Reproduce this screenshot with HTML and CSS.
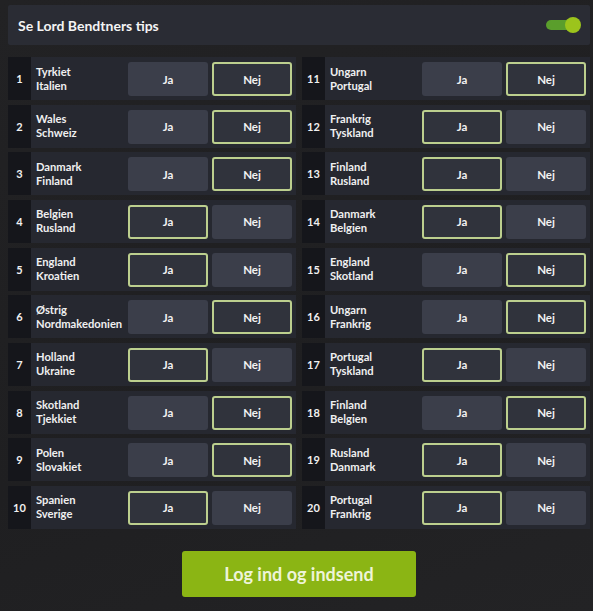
FILE: index.html
```html
<!DOCTYPE html>
<html lang="da">
<head>
<meta charset="utf-8">
<title>Se Lord Bendtners tips</title>
<link rel="stylesheet" href="styles.css">
</head>
<body>
<div class="page">
  <div class="header">
    <span class="title">Se Lord Bendtners tips</span>
    <span class="toggle"><span class="knob"></span></span>
  </div>
  <div class="grid">
    <div class="col">
      <div class="row"><div class="num">1</div><div class="teams">Tyrkiet<br>Italien</div><div class="btn">Ja</div><div class="btn sel">Nej</div></div>
      <div class="row"><div class="num">2</div><div class="teams">Wales<br>Schweiz</div><div class="btn">Ja</div><div class="btn sel">Nej</div></div>
      <div class="row"><div class="num">3</div><div class="teams">Danmark<br>Finland</div><div class="btn">Ja</div><div class="btn sel">Nej</div></div>
      <div class="row"><div class="num">4</div><div class="teams">Belgien<br>Rusland</div><div class="btn sel">Ja</div><div class="btn">Nej</div></div>
      <div class="row"><div class="num">5</div><div class="teams">England<br>Kroatien</div><div class="btn sel">Ja</div><div class="btn">Nej</div></div>
      <div class="row"><div class="num">6</div><div class="teams">Østrig<br>Nordmakedonien</div><div class="btn">Ja</div><div class="btn sel">Nej</div></div>
      <div class="row"><div class="num">7</div><div class="teams">Holland<br>Ukraine</div><div class="btn sel">Ja</div><div class="btn">Nej</div></div>
      <div class="row"><div class="num">8</div><div class="teams">Skotland<br>Tjekkiet</div><div class="btn">Ja</div><div class="btn sel">Nej</div></div>
      <div class="row"><div class="num">9</div><div class="teams">Polen<br>Slovakiet</div><div class="btn">Ja</div><div class="btn sel">Nej</div></div>
      <div class="row"><div class="num">10</div><div class="teams">Spanien<br>Sverige</div><div class="btn sel">Ja</div><div class="btn">Nej</div></div>
    </div>
    <div class="col">
      <div class="row"><div class="num">11</div><div class="teams">Ungarn<br>Portugal</div><div class="btn">Ja</div><div class="btn sel">Nej</div></div>
      <div class="row"><div class="num">12</div><div class="teams">Frankrig<br>Tyskland</div><div class="btn sel">Ja</div><div class="btn">Nej</div></div>
      <div class="row"><div class="num">13</div><div class="teams">Finland<br>Rusland</div><div class="btn sel">Ja</div><div class="btn">Nej</div></div>
      <div class="row"><div class="num">14</div><div class="teams">Danmark<br>Belgien</div><div class="btn sel">Ja</div><div class="btn">Nej</div></div>
      <div class="row"><div class="num">15</div><div class="teams">England<br>Skotland</div><div class="btn">Ja</div><div class="btn sel">Nej</div></div>
      <div class="row"><div class="num">16</div><div class="teams">Ungarn<br>Frankrig</div><div class="btn">Ja</div><div class="btn sel">Nej</div></div>
      <div class="row"><div class="num">17</div><div class="teams">Portugal<br>Tyskland</div><div class="btn sel">Ja</div><div class="btn">Nej</div></div>
      <div class="row"><div class="num">18</div><div class="teams">Finland<br>Belgien</div><div class="btn">Ja</div><div class="btn sel">Nej</div></div>
      <div class="row"><div class="num">19</div><div class="teams">Rusland<br>Danmark</div><div class="btn sel">Ja</div><div class="btn">Nej</div></div>
      <div class="row"><div class="num">20</div><div class="teams">Portugal<br>Frankrig</div><div class="btn sel">Ja</div><div class="btn">Nej</div></div>
    </div>
  </div>
  <div class="footer">
    <div class="submit">Log ind og indsend</div>
  </div>
</div>
</body>
</html>
```

FILE: styles.css
```css
html, body {
  margin: 0;
  padding: 0;
}
body {
  background: linear-gradient(160deg, #222224 0%, #1f1f21 60%, #232325 100%);
  font-family: Lato, "Open Sans", "Liberation Sans", sans-serif;
  color: #f2f2f2;
  width: 593px;
  height: 611px;
  overflow: hidden;
}
.page {
  padding: 5px 3px 0 8px;
}
.header {
  height: 40px;
  background: #2a2c34;
  border-radius: 2px;
  display: flex;
  align-items: center;
  justify-content: space-between;
  padding: 0 10px 0 10px;
  box-sizing: border-box;
}
.title {
  font-size: 14px;
  font-weight: 700;
  color: #f4f4f4;
}
.toggle {
  position: relative;
  width: 28px;
  height: 10px;
  border-radius: 5px;
  background: #5a9e2c;
  margin-right: 6px;
}
.knob {
  position: absolute;
  right: -7px;
  top: -3px;
  width: 16px;
  height: 16px;
  border-radius: 50%;
  background: #9cc41c;
}
.grid {
  margin-top: 12px;
  display: grid;
  grid-template-columns: 288px 288px;
  column-gap: 6px;
}
.col {
  display: flex;
  flex-direction: column;
  gap: 4.67px;
}
.row {
  height: 43px;
  background: #262830;
  display: flex;
  align-items: center;
  padding-right: 4px;
  box-sizing: border-box;
}
.num {
  width: 23px;
  align-self: stretch;
  background: #15161b;
  display: flex;
  align-items: center;
  justify-content: center;
  font-size: 11px;
  font-weight: 700;
  color: #f0f0f0;
}
.teams {
  flex: 1;
  padding-left: 5px;
  font-size: 11.2px;
  font-weight: 700;
  line-height: 14px;
  color: #f0f0f0;
}
.btn {
  width: 80px;
  height: 34px;
  margin-left: 4px;
  box-sizing: border-box;
  background: #3b3e4a;
  border-radius: 3px;
  display: flex;
  align-items: center;
  justify-content: center;
  font-size: 11.5px;
  font-weight: 700;
  color: #f2f2f2;
  margin-top: 1px;
}
.btn.sel {
  background: #30333c;
  border: 2px solid #bccf8e;
}
.footer {
  display: flex;
  justify-content: center;
  margin-top: 22px;
}
.submit {
  width: 234px;
  height: 46px;
  background: #8bb514;
  border-radius: 3px;
  display: flex;
  align-items: center;
  justify-content: center;
  font-size: 18px;
  font-weight: 700;
  color: #eef4d8;
}
```
